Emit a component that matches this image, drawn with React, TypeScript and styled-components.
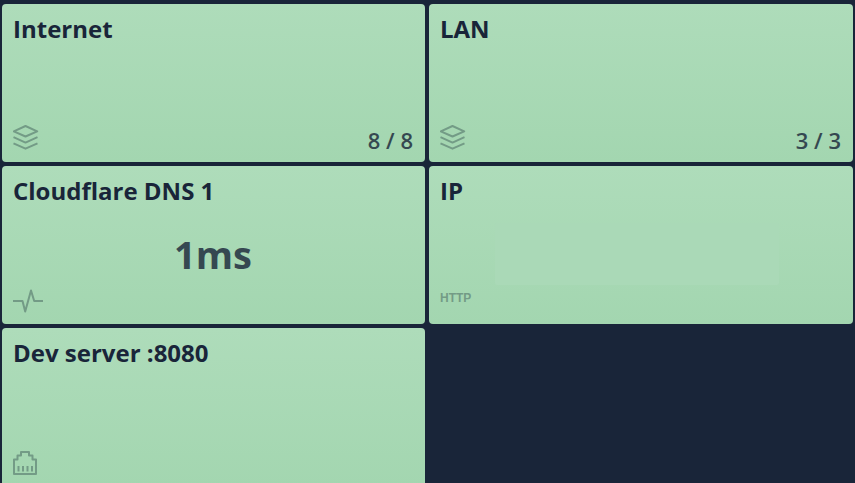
import React, { type ReactNode } from "react";
import styled, { createGlobalStyle } from "styled-components";

const GlobalStyle = createGlobalStyle`
  body { margin: 0; background: #192539; font-family: "Open Sans", "Noto Sans", sans-serif; color: #192539; }
`;
const Board = styled.main`
  display: grid;
  grid-template-columns: round(down, calc(50% - 2px), 1px) minmax(0, 1fr);
  grid-auto-rows: 158px;
  gap: 4px;
  padding: 4px 2px 0;
  height: 100vh;
  box-sizing: border-box;
  overflow: hidden;
`;
const Card = styled.article`
  display: flex;
  flex-direction: column;
  box-sizing: border-box;
  padding: 8px 12px 10px 11px;
  border-radius: 4px;
  background: linear-gradient(#aedcba, #a3d6b0);
`;
const Title = styled.h2`
  margin: 0;
  font-size: 24px;
  line-height: 34px;
  font-weight: 700;
`;
const Content = styled.div`
  flex: 1;
  display: flex;
  align-items: flex-end;
  justify-content: center;
`;
const Value = styled.p`
  margin: 0 0 8px;
  font-size: 38px;
  line-height: 48px;
  font-weight: 700;
  opacity: 0.8;
`;
const Placeholder = styled.div`
  width: 71%;
  height: 62px;
  margin: 0 7px 1px 0;
  border-radius: 2px;
  background: #aad9b7;
`;
const Footer = styled.footer`
  display: flex;
  justify-content: space-between;
  align-items: center;
  height: 28px;
`;
const Count = styled.span`
  padding-top: 4px;
  font-size: 22px;
  line-height: 28px;
  font-weight: 600;
  opacity: 0.8;
`;
const Protocol = styled.span`
  padding-bottom: 4px;
  font: 700 12px/14px "Liberation Sans", sans-serif;
  color: #739b86;
`;
const Glyph = styled.svg`
  display: block;
  fill: none;
  stroke: #739b86;
  stroke-width: 2;
  stroke-linejoin: round;
`;

const LayersIcon = () => (
  <Glyph width="26" height="28" viewBox="0 0 26 28" aria-hidden="true">
    <path d="M.8 7.3 12.5 2l11.7 5.3-11.7 5.2ZM.5 13.2l12 5.4 12-5.4M.5 19.3l12 5.4 12-5.4" />
  </Glyph>
);
const PulseIcon = () => (
  <Glyph width="30" height="28" viewBox="0 0 30 28" aria-hidden="true">
    <path d="M0 15h9.5l2.7 10.5L18 4.5 21.2 15H30" />
  </Glyph>
);
const PortIcon = () => (
  <Glyph width="26" height="28" viewBox="0 0 26 28" aria-hidden="true">
    <path d="M1 26V11.5h3.5V7.5H8V4h8v3.5h3.5v4H23V26ZM5.5 18v5.5M10 18v5.5M14.5 18v5.5M19 18v5.5" />
  </Glyph>
);

type TileProps = { title: string; icon: ReactNode; count?: string; children?: ReactNode };
const Tile = ({ title, icon, count, children }: TileProps) => (
  <Card>
    <Title>{title}</Title>
    <Content>{children}</Content>
    <Footer>
      {icon}
      {count && <Count>{count}</Count>}
    </Footer>
  </Card>
);

export default function App() {
  return (
    <>
      <GlobalStyle />
      <Board>
        <Tile title="Internet" icon={<LayersIcon />} count="8 / 8" />
        <Tile title="LAN" icon={<LayersIcon />} count="3 / 3" />
        <Tile title="Cloudflare DNS 1" icon={<PulseIcon />}>
          <Value>1ms</Value>
        </Tile>
        <Tile title="IP" icon={<Protocol>HTTP</Protocol>}>
          <Placeholder />
        </Tile>
        <Tile title="Dev server :8080" icon={<PortIcon />} />
      </Board>
    </>
  );
}
